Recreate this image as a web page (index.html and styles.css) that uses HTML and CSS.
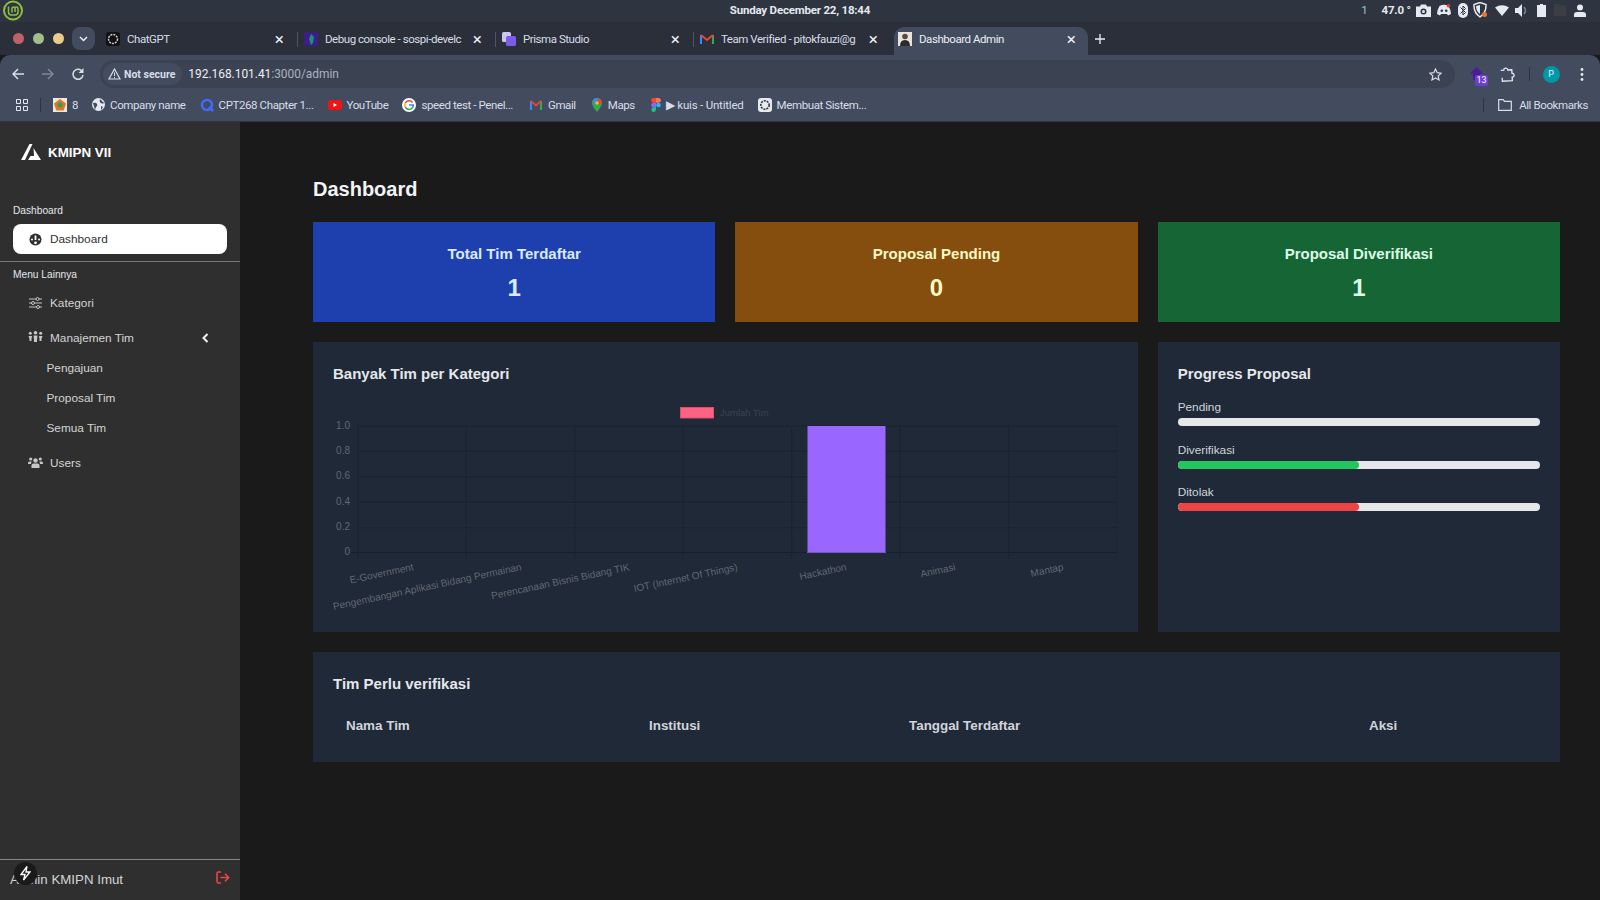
FILE: index.html
```html
<!DOCTYPE html>
<html>
  <head>
    <meta charset="utf-8">
    <title>Dashboard Admin</title>
    <link rel="stylesheet" href="styles.css">
  </head>
  <body>
    <!-- Desktop panel -->
    <div class="os-bar">
      <svg class="os-logo" width="22" height="22" viewBox="0 0 22 22"><circle cx="11" cy="10.5" r="9" fill="none" stroke="#8fbf3f" stroke-width="2"/><path d="M6.5 6.5v5.5q0 3 3 3h3.5q3 0 3-3V8.5q0-1.500-1.500-1.500t-1.500 1.500V12M10 8.500q0-1.500 1.500-1.500t1.500 1.500M10 8v4.500" fill="none" stroke="#8fbf3f" stroke-width="1.5"/></svg>
      <div class="os-clock">Sunday December 22, 18:44</div>
      <div class="tray">
        <span class="tray-num">1</span>
        <span class="tray-temp">47.0 °</span>
        <svg class="tray-cam" width="15" height="13" viewBox="0 0 15 13"><path d="M0 2.5h4l1-2h5l1 2h4V13H0z" fill="#e5e9f0"/><circle cx="7.5" cy="7.5" r="3" fill="#2e3440"/><circle cx="7.5" cy="7.5" r="1.5" fill="#e5e9f0"/></svg>
        <svg class="tray-discord" width="14" height="12" viewBox="0 0 14 12"><path d="M2.5 2Q7-.5 11.5 2 14 6 14 10l-3 1.5-1-1.500H4l-1 1.500L0 10Q0 6 2.500 2z" fill="#e5e9f0"/><circle cx="4.8" cy="6.8" r="1.3" fill="#2e3440"/><circle cx="9.2" cy="6.8" r="1.3" fill="#2e3440"/><circle cx="11.5" cy="1.8" r="1.8" fill="#e53935"/></svg>
        <svg class="tray-bt" width="10" height="15" viewBox="0 0 10 15"><rect width="10" height="15" rx="5" fill="#e5e9f0"/><path d="M2.5 4.5l5 5L5 12V3l2.5 2.5-5 5" fill="none" stroke="#2e3440"/></svg>
        <svg class="tray-shield" width="15" height="16" viewBox="0 0 15 16"><path d="M7 .5l6 2q.5 8-6 12.5-6.500-4.500-6-12.500z" fill="none" stroke="#e5e9f0" stroke-width="1.5"/><path d="M7 3v9Q3 9 3 4z" fill="#e5e9f0"/><circle cx="11.5" cy="12.5" r="2.5" fill="#f0762b"/></svg>
        <svg class="tray-wifi" width="14" height="11" viewBox="0 0 14 11"><path d="M0 2.5Q7-2 14 2.5L7 11z" fill="#e5e9f0"/></svg>
        <svg class="tray-vol" width="13" height="13" viewBox="0 0 13 13"><path d="M0 4h3l4-4v13L3 9H0z" fill="#e5e9f0"/><path d="M9 3q3 3.5 0 7" fill="none" stroke="#7b828f" stroke-width="1.5"/></svg>
        <svg class="tray-bat" width="9" height="13" viewBox="0 0 9 13"><path d="M3 0h3v1h3v12H0V1h3z" fill="#e5e9f0"/></svg>
        <svg class="tray-folder" width="12" height="12" viewBox="0 0 12 12"><path d="M0 0h5l1 1.5h6V12H0z" fill="#3b3f45"/></svg>
        <svg class="tray-user" width="12" height="13" viewBox="0 0 12 13"><circle cx="6" cy="3.5" r="3" fill="#e5e9f0"/><path d="M0 13v-2.500Q0 8 3 8h6q3 0 3 2.500V13z" fill="#e5e9f0"/></svg>
      </div>
    </div>

    <!-- Tab strip -->
    <div class="tab-strip">
      <div class="lights">
        <span class="light light-red"></span>
        <span class="light light-green"></span>
        <span class="light light-yellow"></span>
      </div>
      <div class="tab-search">
        <svg width="9" height="6" viewBox="0 0 9 6"><path d="M1 1l3.5 3.5L8 1" fill="none" stroke="#eceff4" stroke-width="1.5"/></svg>
      </div>
      <div class="tab">
        <svg class="fav" width="14" height="14" viewBox="0 0 14 14"><rect width="14" height="14" rx="3" fill="#111"/><circle cx="7" cy="7" r="4.5" fill="none" stroke="#ccc" stroke-width="1.5" stroke-dasharray="2 1"/></svg>
        <span class="tab-title">ChatGPT</span>
        <span class="tab-x">×</span>
      </div>
      <div class="tab tab-sep">
        <svg class="fav" width="14" height="14" viewBox="0 0 14 14"><rect width="14" height="14" rx="2" fill="#3a1f85"/><path d="M7 2l3 3-1 6-2 2-2-6z" fill="#1e8f7a"/></svg>
        <span class="tab-title">Debug console - sospi-develc</span>
        <span class="tab-x">×</span>
      </div>
      <div class="tab tab-sep">
        <svg class="fav" width="14" height="14" viewBox="0 0 14 14"><rect width="9" height="10" rx="1.5" fill="#c9c6ef"/><rect x="4" y="4" width="10" height="10" rx="1.5" fill="#7c5ce6"/></svg>
        <span class="tab-title">Prisma Studio</span>
        <span class="tab-x">×</span>
      </div>
      <div class="tab tab-sep">
        <svg class="fav" width="14" height="14" viewBox="0 0 14 14"><path d="M1 3v9" stroke="#4285f4" stroke-width="2"/><path d="M13 3v9" stroke="#34a853" stroke-width="2"/><path d="M1 3l6 5 6-5" fill="none" stroke="#ea4335" stroke-width="2"/></svg>
        <span class="tab-title">Team Verified - pitokfauzi@g</span>
        <span class="tab-x">×</span>
      </div>
      <div class="tab tab-active">
        <svg class="fav" width="14" height="14" viewBox="0 0 14 14"><rect width="14" height="14" fill="#e8e4dc"/><circle cx="7" cy="4.5" r="2.8" fill="#5a4a3c"/><path d="M2 14q0-6 5-6t5 6z" fill="#2b2b2b"/></svg>
        <span class="tab-title">Dashboard Admin</span>
        <span class="tab-x">×</span>
      </div>
      <svg class="tab-new" width="10" height="10" viewBox="0 0 10 10"><path d="M5 0v10M0 5h10" stroke="#eceff4" stroke-width="1.3"/></svg>
    </div>

    <!-- Address bar -->
    <div class="toolbar">
      <svg class="nav-back" width="12" height="12" viewBox="0 0 12 12"><path d="M12 6H1.5M6 1L1 6l5 5" fill="none" stroke="#d8dee9" stroke-width="1.5"/></svg>
      <svg class="nav-forward" width="12" height="12" viewBox="0 0 12 12"><path d="M0 6h10.500M6 1l5 5-5 5" fill="none" stroke="#7f8796" stroke-width="1.5"/></svg>
      <svg class="nav-reload" width="12" height="12" viewBox="0 0 12 12"><path d="M10.500 4A5 5 0 1 0 11 7" fill="none" stroke="#d8dee9" stroke-width="1.5"/><path d="M11.500 0v5h-5z" fill="#d8dee9"/></svg>
      <div class="omnibox">
        <div class="chip">
          <svg width="13" height="12" viewBox="0 0 13 12"><path d="M6.5 1L12 11H1z" fill="none" stroke="#d8dee9" stroke-width="1.2"/><path d="M6.5 4.5v3.5M6.5 9v1" stroke="#d8dee9"/></svg>
          <span>Not secure</span>
        </div>
        <div class="url"><span class="url-host">192.168.101.41</span>:3000/admin</div>
        <svg class="star" width="13" height="13" viewBox="0 0 13 13"><path d="M6.5 1l1.700 3.700 4 .5-3 2.700.8 4-3.500-2-3.500 2 .8-4-3-2.700 4-.5z" fill="none" stroke="#d8dee9" stroke-width="1.2"/></svg>
      </div>
      <div class="ext">
        <svg class="ext-arrow" width="13" height="13" viewBox="0 0 13 13"><path d="M6.5 0l6.500 6.500H10V13H3V6.500H0z" fill="#4c1d95"/></svg>
        <span class="ext-badge">13</span>
      </div>
      <svg class="puzzle" width="15" height="15" viewBox="0 0 15 15"><path d="M1 3h3q0-2 2-2t2 2h4v3.500q2 0 2 2t-2 2V14H2v-3.500" fill="none" stroke="#e5e9f0" stroke-width="1.3" transform="rotate(-3 7 7)"/></svg>
      <span class="tool-sep"></span>
      <span class="avatar">P</span>
      <svg class="dots" width="4" height="13" viewBox="0 0 4 13"><circle cx="2" cy="1.5" r="1.4" fill="#e5e9f0"/><circle cx="2" cy="6.5" r="1.4" fill="#e5e9f0"/><circle cx="2" cy="11.5" r="1.4" fill="#e5e9f0"/></svg>
    </div>

    <!-- Bookmarks -->
    <div class="bookmarks">
      <svg class="apps" width="12" height="12" viewBox="0 0 12 12"><path d="M.5.5h4v4h-4zM7.5.5h4v4h-4zM.5 7.500h4v4h-4zM7.500 7.500h4v4h-4z" fill="none" stroke="#e5e9f0"/></svg>
      <span class="bm-sep"></span>
      <div class="bm">
        <svg width="14" height="14" viewBox="0 0 14 14"><rect width="14" height="14" fill="#f0e8d8"/><path d="M7 1l6 4.500-2.300 7H3.300L1 5.500z" fill="#d9782d"/><circle cx="7" cy="7" r="2.5" fill="#3f9a44"/></svg>
        <span>8</span>
      </div>
      <div class="bm">
        <svg width="13" height="13" viewBox="0 0 13 13"><circle cx="6.5" cy="6.5" r="6.5" fill="#e5e9f0"/><path d="M1 5q3-1 4 1t-1 3l-1 3M8 1q-1 3 1 4t3 0M9 8l2 1-2 3z" fill="#434c5e"/></svg>
        <span>Company name</span>
      </div>
      <div class="bm">
        <svg width="14" height="14" viewBox="0 0 14 14"><circle cx="7" cy="7" r="5" fill="none" stroke="#3f6bff" stroke-width="2.5"/><path d="M9 9l4 4" stroke="#3f6bff" stroke-width="2.5"/></svg>
        <span>CPT268 Chapter 1...</span>
      </div>
      <div class="bm">
        <svg width="14" height="14" viewBox="0 0 14 14"><rect y="2" width="14" height="10" rx="3" fill="#f01414"/><path d="M5.5 5v4L9 7z" fill="#fff"/></svg>
        <span>YouTube</span>
      </div>
      <div class="bm">
        <svg width="14" height="14" viewBox="0 0 14 14"><circle cx="7" cy="7" r="7" fill="#fff"/><path d="M10.500 4.500A4.200 4.200 0 0 0 3.300 5" fill="none" stroke="#ea4335" stroke-width="1.6"/><path d="M3.300 5a4.200 4.200 0 0 0 0 4" fill="none" stroke="#fbbc05" stroke-width="1.6"/><path d="M3.300 9a4.200 4.200 0 0 0 7 1" fill="none" stroke="#34a853" stroke-width="1.6"/><path d="M10.300 10q1-1.200 1-3H7" fill="none" stroke="#4285f4" stroke-width="1.6"/></svg>
        <span>speed test - Penel...</span>
      </div>
      <div class="bm bm-gmail">
        <svg width="14" height="14" viewBox="0 0 14 14"><path d="M2 3v9" stroke="#4285f4" stroke-width="2"/><path d="M12 3v9" stroke="#34a853" stroke-width="2"/><path d="M2 3l5 4.500L12 3" fill="none" stroke="#ea4335" stroke-width="2"/></svg>
        <span>Gmail</span>
      </div>
      <div class="bm bm-maps">
        <svg width="12" height="14" viewBox="0 0 12 14"><path d="M6 14Q1 8 1 5a5 5 0 0 1 10 0q0 3-5 9z" fill="#34a853"/><path d="M1.5 3A5 5 0 0 1 6 0l2 3-4 3z" fill="#4285f4"/><path d="M8 .5A5 5 0 0 1 11 5L8 6 6 3z" fill="#ea4335"/><circle cx="6" cy="5" r="1.8" fill="#fbbc05"/></svg>
        <span>Maps</span>
      </div>
      <div class="bm bm-kuis">
        <svg width="10" height="14" viewBox="0 0 10 14"><path d="M5 0H2.500a2.300 2.300 0 0 0 0 4.700H5z" fill="#f24e1e"/><path d="M5 0h2.500a2.300 2.300 0 0 1 0 4.700H5z" fill="#ff7262"/><path d="M5 4.700H2.500a2.300 2.300 0 0 0 0 4.600H5z" fill="#a259ff"/><circle cx="7.5" cy="7" r="2.3" fill="#1abcfe"/><path d="M5 9.300H2.500A2.300 2.300 0 1 0 5 11.600z" fill="#0acf83"/></svg>
        <span>▶ kuis - Untitled</span>
      </div>
      <div class="bm">
        <svg width="14" height="14" viewBox="0 0 14 14"><rect width="14" height="14" rx="3" fill="#e5e9f0"/><circle cx="7" cy="7" r="4.2" fill="none" stroke="#333" stroke-width="1.6" stroke-dasharray="2 1"/></svg>
        <span>Membuat Sistem...</span>
      </div>
      <span class="bm-sep bm-sep-end"></span>
      <div class="bm bm-all">
        <svg width="14" height="12" viewBox="0 0 14 12"><path d="M.7 11.300V.7h4.500l1.300 1.600h6.800v9z" fill="none" stroke="#d8dee9" stroke-width="1.2"/></svg>
        <span>All Bookmarks</span>
      </div>
    </div>

    <div class="app">
      <aside class="sidebar">
        <div class="brand">
          <svg width="20" height="16" viewBox="0 0 20 16"><path d="M8.500 0h3L4 16H0z" fill="#fff"/><path d="M12.500 4L20 16H7l2.500-4h3.500z" fill="#fff"/></svg>
          <span>KMIPN VII</span>
        </div>

        <div class="side-label side-label-first">Dashboard</div>
        <a class="side-active">
          <svg class="side-icon" width="13" height="13" viewBox="0 0 13 13"><circle cx="6.5" cy="6.5" r="6" fill="#2f2f2f"/><path d="M6.5 2.5v4.500" stroke="#fff" stroke-width="1.8"/><circle cx="3" cy="6.5" r="1" fill="#fff"/><circle cx="10" cy="6.5" r="1" fill="#fff"/><circle cx="6.5" cy="9.8" r="1.4" fill="#fff"/></svg>
          <span>Dashboard</span>
        </a>
        <div class="side-divider"></div>
        <div class="side-label">Menu Lainnya</div>

        <nav class="side-nav">
          <a class="side-link">
            <svg class="side-icon" width="13" height="12" viewBox="0 0 13 12"><path d="M0 2h13M0 6h13M0 10h13" stroke="#c6c6c6" stroke-width="1.1"/><circle cx="8.5" cy="2" r="1.5" fill="#2f2f2f" stroke="#c6c6c6"/><circle cx="4" cy="6" r="1.5" fill="#2f2f2f" stroke="#c6c6c6"/><circle cx="9" cy="10" r="1.5" fill="#2f2f2f" stroke="#c6c6c6"/></svg>
            <span>Kategori</span>
          </a>
          <a class="side-link side-link-group">
            <svg class="side-icon side-icon-wide" width="15" height="11" viewBox="0 0 15 11"><circle cx="7.5" cy="1.8" r="1.8" fill="#c6c6c6"/><path d="M5.5 4.500h4l-.5 4v2.500H6V8.500z" fill="#c6c6c6"/><circle cx="2.300" cy="2.300" r="1.5" fill="#c6c6c6"/><path d="M.5 5h3.500l-.5 3v2H1.500V8z" fill="#c6c6c6"/><circle cx="12.700" cy="2.300" r="1.5" fill="#c6c6c6"/><path d="M11 5h3.500L13.500 8v2H11.500V8z" fill="#c6c6c6"/></svg>
            <span>Manajemen Tim</span>
            <svg class="chevron" width="7" height="10" viewBox="0 0 7 10"><path d="M5.500 1L1.500 5l4 4" fill="none" stroke="#f2f2f2" stroke-width="2"/></svg>
          </a>
          <a class="side-sub">Pengajuan</a>
          <a class="side-sub">Proposal Tim</a>
          <a class="side-sub">Semua Tim</a>
          <a class="side-link side-link-users">
            <svg class="side-icon side-icon-wide" width="15" height="11" viewBox="0 0 15 11"><circle cx="7.5" cy="3.5" r="2.2" fill="#c6c6c6"/><path d="M3.500 11V8.500q0-2 2-2h4q2 0 2 2V11z" fill="#c6c6c6"/><circle cx="2.700" cy="2" r="1.6" fill="#c6c6c6"/><path d="M0 7V6q0-1.500 1.500-1.500h2L3 7z" fill="#c6c6c6"/><circle cx="12.300" cy="2" r="1.6" fill="#c6c6c6"/><path d="M15 7V6q0-1.500-1.500-1.500h-2L12 7z" fill="#c6c6c6"/></svg>
            <span>Users</span>
          </a>
        </nav>

        <div class="side-footer">
          <span class="side-user">Admin KMIPN Imut</span>
          <svg class="logout" width="14" height="13" viewBox="0 0 14 13"><path d="M5 1H2.500Q1 1 1 2.500v8Q1 12 2.500 12H5" fill="none" stroke="#ef4444" stroke-width="1.6"/><path d="M4.500 6.500h8M9 2.800l3.700 3.700L9 10.200" fill="none" stroke="#ef4444" stroke-width="1.6"/></svg>
        </div>
        <div class="dev-badge">
          <svg width="11" height="15" viewBox="0 0 11 15"><path d="M7 .5L1 8.500h4L3.500 14l6.500-8H6z" fill="none" stroke="#fff" stroke-width="1.3"/></svg>
        </div>
      </aside>

      <main class="content">
        <h1>Dashboard</h1>

        <div class="stats">
          <div class="stat stat-blue">
            <h3>Total Tim Terdaftar</h3>
            <p>1</p>
          </div>
          <div class="stat stat-yellow">
            <h3>Proposal Pending</h3>
            <p>0</p>
          </div>
          <div class="stat stat-green">
            <h3>Proposal Diverifikasi</h3>
            <p>1</p>
          </div>
        </div>

        <div class="charts">
          <section class="panel panel-chart">
            <h2>Banyak Tim per Kategori</h2>
            <svg class="bar-chart" width="784" height="222" viewBox="333 390 784 222">
              <g class="grid">
                <path d="M358 426H1117M358 451.400H1117M358 476.800H1117M358 502.200H1117M358 527.600H1117"/>
                <path d="M358 426V559M466.400 426V559M574.900 426V559M683.300 426V559M791.700 426V559M900.100 426V559M1008.600 426V559M1117 426V559"/>
                <path class="grid-zero" d="M351 552.500H1117"/>
              </g>
              <rect class="legend-box" x="680.500" y="407.500" width="33" height="10.500"/>
              <text class="legend-text" x="720" y="415.500">Jumlah Tim</text>
              <g class="ticks-y">
                <text x="350" y="428.500">1.0</text>
                <text x="350" y="454">0.8</text>
                <text x="350" y="479">0.6</text>
                <text x="350" y="504.500">0.4</text>
                <text x="350" y="530">0.2</text>
                <text x="350" y="555">0</text>
              </g>
              <rect class="bar" x="807.500" y="426" width="78" height="126.500"/>
              <path class="bar-base" d="M807 552.500H886"/>
              <g class="ticks-x">
                <text transform="rotate(-12 414 570)" x="414" y="570">E-Government</text>
                <text transform="rotate(-12 522 570)" x="522" y="570">Pengembangan Aplikasi Bidang Permainan</text>
                <text transform="rotate(-12 630 570)" x="630" y="570">Perencanaan Bisnis Bidang TIK</text>
                <text transform="rotate(-12 738 570)" x="738" y="570">IOT (Internet Of Things)</text>
                <text transform="rotate(-12 847 570)" x="847" y="570">Hackathon</text>
                <text transform="rotate(-12 956 570)" x="956" y="570">Animasi</text>
                <text transform="rotate(-12 1064 570)" x="1064" y="570">Mantap</text>
              </g>
            </svg>
          </section>

          <section class="panel">
            <h2>Progress Proposal</h2>
            <div class="progress-list">
              <div class="progress">
                <div class="progress-label">Pending</div>
                <div class="track"></div>
              </div>
              <div class="progress">
                <div class="progress-label">Diverifikasi</div>
                <div class="track"><div class="fill fill-green" style="width: 50%"></div></div>
              </div>
              <div class="progress">
                <div class="progress-label">Ditolak</div>
                <div class="track"><div class="fill fill-red" style="width: 50%"></div></div>
              </div>
            </div>
          </section>
        </div>

        <section class="panel panel-table">
          <h2>Tim Perlu verifikasi</h2>
          <table>
            <thead>
              <tr>
                <th class="col-name">Nama Tim</th>
                <th class="col-inst">Institusi</th>
                <th class="col-date">Tanggal Terdaftar</th>
                <th>Aksi</th>
              </tr>
            </thead>
          </table>
        </section>
      </main>
    </div>
  </body>
</html>
```

FILE: styles.css
```css
* {
  box-sizing: border-box;
}

html,
body {
  margin: 0;
  height: 100%;
  overflow: hidden;
}

body {
  display: flex;
  flex-direction: column;
  width: 1600px;
  height: 900px;
  background: #1a1a1a;
  font-family: "Liberation Sans", Arial, sans-serif;
}

/* desktop panel */
.os-bar {
  position: relative;
  display: flex;
  align-items: center;
  height: 22px;
  padding-left: 2px;
  background: #2e3440;
  color: #e5e9f0;
  font-family: Roboto, "Liberation Sans", sans-serif;
  font-size: 11.5px;
  letter-spacing: -0.2px;
}

.os-clock {
  position: absolute;
  left: 0;
  right: 0;
  top: 3px;
  text-align: center;
  font-weight: 700;
}

.tray {
  display: flex;
  align-items: center;
  align-self: flex-start;
  margin-left: auto;
  height: 20px;
}

.tray-num {
  color: #9fc5d8;
  margin-right: 14px;
}

.tray-temp {
  width: 34px;
  font-weight: 700;
}

.tray-discord {
  margin-left: 6.5px;
}

.tray-bt {
  margin-left: 7px;
}

.tray-shield {
  margin-left: 5px;
}

.tray-wifi {
  margin-left: 7px;
}

.tray-vol {
  margin-left: 6px;
}

.tray-bat {
  margin-left: 9px;
}

.tray-folder {
  margin-left: 8px;
}

.tray-user {
  margin: 0 14px 0 8px;
}

/* tabs */
.tab-strip {
  display: flex;
  align-items: flex-end;
  height: 33px;
  padding-left: 13px;
  background: #2a2f3a;
}

.lights {
  display: flex;
  gap: 9px;
  height: 23px;
  align-items: center;
  align-self: flex-start;
  margin-top: 5px;
}

.light {
  width: 11px;
  height: 11px;
  border-radius: 50%;
}

.light-red {
  background: #bf616a;
}

.light-green {
  background: #a3be8c;
}

.light-yellow {
  background: #ebcb8b;
}

.tab-search {
  display: flex;
  align-items: center;
  justify-content: center;
  align-self: flex-start;
  width: 23px;
  height: 23px;
  margin: 5px 5px 0 8px;
  border-radius: 8px;
  background: #434c5e;
}

.tab {
  position: relative;
  display: flex;
  align-items: center;
  width: 198px;
  height: 28px;
  padding: 0 13px 5px 6px;
  color: #d8dee9;
  font-family: Roboto, "Liberation Sans", sans-serif;
  font-size: 11.5px;
  letter-spacing: -0.45px;
}

.tab-sep::before {
  content: "";
  position: absolute;
  left: -1px;
  top: 5px;
  width: 1px;
  height: 15px;
  background: #4c566a;
}

.tab-active {
  width: 194px;
  margin: 0 2px;
  padding: 0 11px 5px 4px;
  background: #434c5e;
  border-radius: 10px 10px 0 0;
  color: #eceff4;
}

.fav {
  flex: none;
  margin-right: 7px;
}

.tab-title {
  flex: 1;
  overflow: hidden;
  white-space: nowrap;
}

.tab-x {
  flex: none;
  width: 12px;
  margin-left: 8px;
  font-size: 17px;
  line-height: 16px;
  text-align: center;
  color: #eceff4;
}

.tab-new {
  align-self: center;
  margin: 0 0 0 5px;
}

/* address bar */
.toolbar {
  display: flex;
  align-items: center;
  height: 33px;
  padding-top: 5px;
  background: #434c5e;
  border-radius: 10px 10px 0 0;
}

.nav-back {
  margin-left: 12px;
}

.nav-forward {
  margin-left: 18px;
}

.nav-reload {
  margin-left: 18px;
}

.omnibox {
  display: flex;
  align-items: center;
  flex: none;
  width: 1355px;
  height: 28px;
  margin-left: 16px;
  padding-left: 3px;
  background: #3b4252;
  border-radius: 14px;
  color: #d8dee9;
  font-family: Roboto, "Liberation Sans", sans-serif;
  font-size: 11.9px;
}

.chip {
  display: flex;
  align-items: center;
  gap: 3px;
  height: 22px;
  padding: 0 7px 0 5px;
  background: #434c5e;
  border-radius: 11px;
  font-size: 10.5px;
  font-weight: 700;
}

.url {
  margin-left: 6px;
  color: #aab2c0;
}

.url-host {
  color: #eceff4;
}

.star {
  margin-left: auto;
  margin-right: 13px;
}

.ext {
  position: relative;
  flex: none;
  width: 14px;
  height: 14px;
  margin-left: 15px;
}

.ext-arrow {
  display: block;
}

.ext-badge {
  position: absolute;
  left: 5px;
  top: 8px;
  width: 13px;
  height: 11px;
  border-radius: 2px;
  background: #6d3fd0;
  color: #fff;
  font-family: Roboto, sans-serif;
  font-size: 9px;
  line-height: 11px;
  text-align: center;
}

.puzzle {
  flex: none;
  margin-left: 15.5px;
}

.tool-sep {
  flex: none;
  width: 1px;
  height: 14px;
  margin-left: 14px;
  background: #2e3440;
}

.avatar {
  flex: none;
  width: 17px;
  height: 17px;
  margin-left: 13px;
  border-radius: 50%;
  background: #0097a7;
  color: #e0f7fa;
  font-family: Roboto, sans-serif;
  font-size: 9px;
  line-height: 17px;
  text-align: center;
}

.dots {
  flex: none;
  margin-left: 20px;
}

/* bookmarks */
.bookmarks {
  display: flex;
  align-items: center;
  gap: 14px;
  height: 34px;
  padding-left: 16px;
  background: #434c5e;
  color: #d8dee9;
  font-family: Roboto, "Liberation Sans", sans-serif;
  font-size: 11.5px;
  letter-spacing: -0.4px;
  border-bottom: 1px solid #2e3440;
}

.apps {
  margin-right: -2px;
}

.bm {
  display: flex;
  align-items: center;
  gap: 5px;
  white-space: nowrap;
}

.bm-gmail {
  margin-left: 2px;
}

.bm-maps {
  margin-left: 1px;
}

.bm-kuis {
  margin-left: 2px;
  letter-spacing: -0.2px;
}

.bm-sep {
  width: 1px;
  height: 14px;
  margin-right: -2px;
  background: #2e3440;
}

.bm-sep-end {
  margin-left: auto;
  margin-right: 0;
}

.bm-all {
  margin-right: 12px;
  gap: 7px;
}

/* app */
.app {
  display: flex;
  flex: 1;
  min-height: 0;
}

.sidebar {
  position: relative;
  display: flex;
  flex-direction: column;
  flex: none;
  width: 240px;
  background: #2f2f2f;
  color: #d4d4d4;
}

.brand {
  display: flex;
  align-items: center;
  gap: 7px;
  height: 20px;
  margin: 20px 0 0 21px;
  color: #fff;
  font-size: 13.4px;
  font-weight: 700;
}

.side-label {
  margin-left: 13px;
  color: #e5e7eb;
  font-size: 10.2px;
  line-height: 14px;
}

.side-label-first {
  margin-top: 42px;
}

.side-active {
  display: flex;
  align-items: center;
  height: 30px;
  margin: 6px 13px 7px;
  padding-left: 16px;
  background: #fff;
  border-radius: 8px;
  color: #2f2f2f;
  font-size: 11.8px;
}

.side-icon {
  flex: none;
  margin-right: 8px;
}

.side-icon-wide {
  margin-left: -1px;
  margin-right: 7px;
}

.side-divider {
  height: 1px;
  background: #777;
  margin-bottom: 6px;
}

.side-nav {
  display: flex;
  flex-direction: column;
  padding-top: 3px;
}

.side-link {
  display: flex;
  align-items: center;
  height: 35px;
  padding-left: 29px;
  font-size: 11.8px;
}

.side-link-group {
  margin-bottom: -2px;
}

.side-link-group .side-icon {
  margin-top: -3px;
}

.side-link-users {
  margin-top: 2px;
}

.chevron {
  margin-left: 68px;
}

.side-sub {
  display: block;
  padding-left: 46.5px;
  font-size: 11.8px;
  line-height: 30px;
}

.side-footer {
  display: flex;
  align-items: center;
  justify-content: space-between;
  height: 41px;
  margin-top: auto;
  padding: 0 10px;
  border-top: 1px solid #888;
  color: #d4d4d4;
  font-size: 13.3px;
}

.side-user {
  margin-top: -2px;
}

.logout {
  margin-top: -6px;
}

.dev-badge {
  position: absolute;
  left: 14px;
  bottom: 15px;
  display: flex;
  align-items: center;
  justify-content: center;
  width: 23px;
  height: 23px;
  border-radius: 50%;
  background: #1a1a1a;
}

/* main */
.content {
  flex: 1;
  min-width: 0;
  padding: 53px 40px 0 73px;
}

h1 {
  margin: 0 0 19px;
  color: #f3f4f6;
  font-size: 20px;
  line-height: 28px;
  font-weight: 700;
}

.stats {
  display: grid;
  grid-template-columns: repeat(3, 1fr);
  gap: 20px;
  margin-bottom: 20px;
}

.stat {
  height: 100px;
  padding: 20px;
  text-align: center;
}

.stat h3 {
  margin: 0 0 6px;
  font-size: 15px;
  line-height: 24px;
}

.stat p {
  margin: 0;
  font-size: 24px;
  line-height: 32px;
  font-weight: 700;
}

.stat-blue {
  background: #1e40af;
  color: #dbeafe;
}

.stat-yellow {
  background: #854d0e;
  color: #fef9c3;
}

.stat-green {
  background: #166534;
  color: #dcfce7;
}

.charts {
  display: grid;
  grid-template-columns: repeat(3, 1fr);
  gap: 20px;
  margin-bottom: 20px;
}

.panel {
  padding: 20px;
  background: #1f2937;
}

.panel-chart {
  grid-column: span 2;
}

.panel h2 {
  margin: 0;
  color: #e5e7eb;
  font-size: 15px;
  line-height: 24px;
}

.bar-chart {
  display: block;
  margin-top: 4px;
  font-family: "Liberation Sans", Arial, sans-serif;
  font-size: 10px;
}

.grid path {
  fill: none;
  stroke: #1b2431;
  stroke-width: 1;
}

.grid .grid-zero {
  stroke: #18202b;
}

.legend-box {
  fill: #ff6384;
  stroke: #d94f6c;
}

.legend-text {
  fill: #3c4450;
  font-size: 9.5px;
}

.ticks-y text {
  fill: #626873;
  text-anchor: end;
}

.ticks-x text {
  fill: #626873;
  text-anchor: end;
}

.bar {
  fill: #9966ff;
}

.bar-base {
  stroke: #7a52cc;
  stroke-width: 1;
}

.progress-list {
  display: flex;
  flex-direction: column;
  gap: 15.5px;
  margin-top: 13px;
}

.progress-label {
  margin-bottom: 2px;
  color: #d1d5db;
  font-size: 11.8px;
  line-height: 16px;
}

.track {
  height: 8px;
  margin-top: 3px;
  border-radius: 4px;
  background: #e5e7eb;
  overflow: hidden;
}

.fill {
  height: 100%;
  border-radius: 4px;
}

.fill-green {
  background: #22c55e;
}

.fill-red {
  background: #ef4444;
}

.panel-table {
  padding-bottom: 22px;
}

table {
  width: 100%;
  margin-top: 16px;
  border-collapse: collapse;
  table-layout: fixed;
}

th {
  padding: 6px 13px;
  color: #d1d5db;
  font-size: 13.4px;
  line-height: 16px;
  text-align: left;
}

.col-name {
  width: 303px;
}

.col-inst {
  width: 260px;
}

.col-date {
  width: 460px;
}
```
